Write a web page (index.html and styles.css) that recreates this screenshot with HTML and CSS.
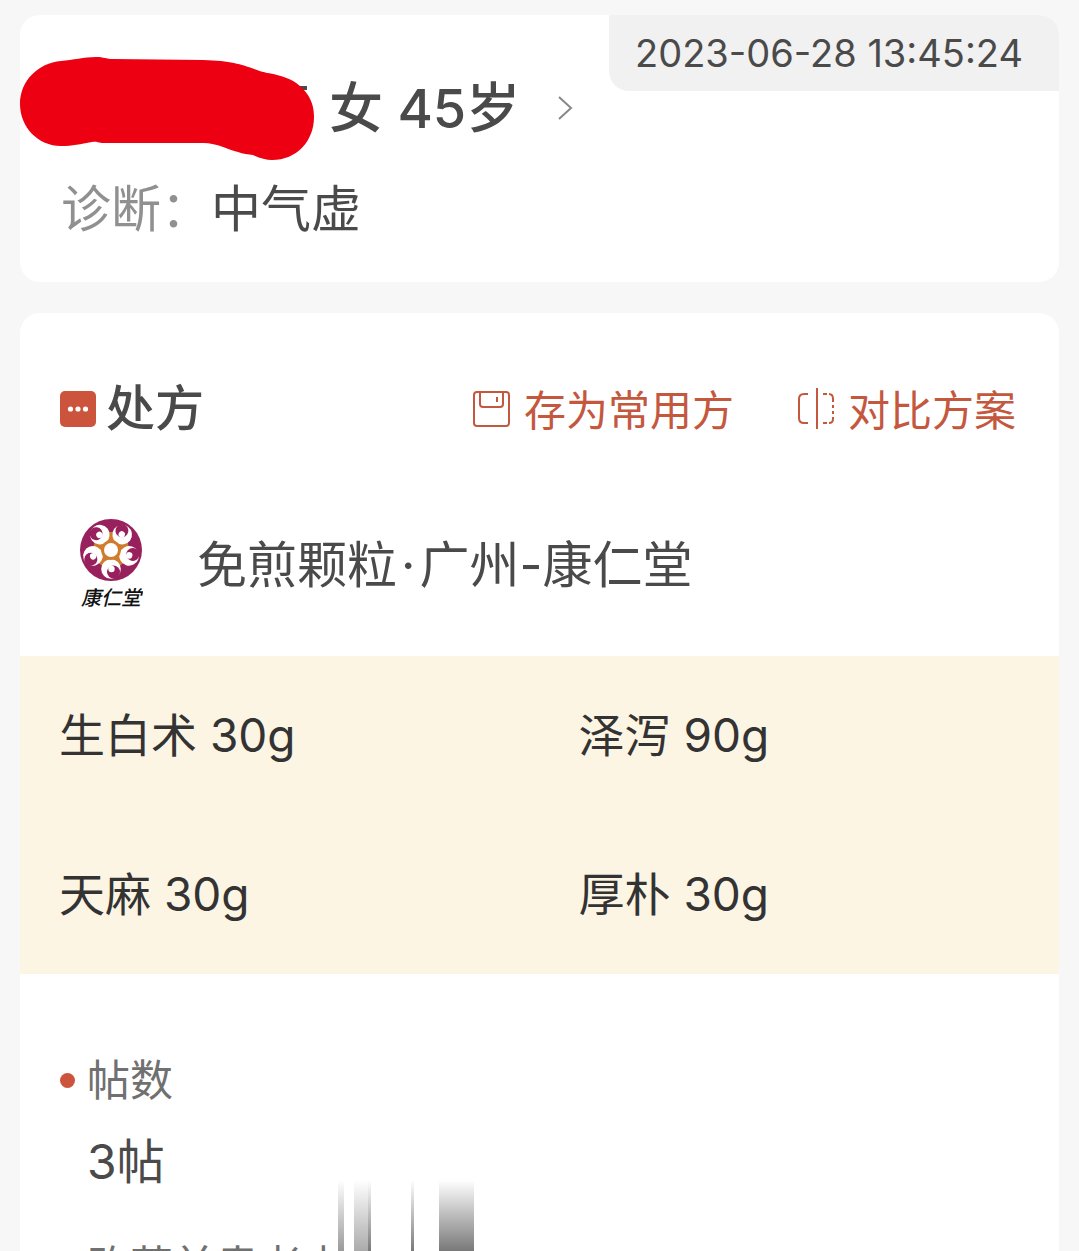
FILE: index.html
```
<!DOCTYPE html>
<html lang="zh-CN">

<head>
    <meta charset="UTF-8">
    <meta name="viewport" content="width=device-width, initial-scale=1.0">
    <title>处方详情</title>
    <link rel="stylesheet" href="styles.css">
</head>

<body>
    <main class="page">
        <section class="card patient">
            <time class="patient-time" datetime="2023-06-28T13:45:24">2023-06-28 13:45:24</time>
            <a class="patient-row" href="#patient">
                <svg class="name-mask" viewBox="0 1 294 104" aria-hidden="true">
                    <path d="M280 30h7v4h-7z" fill="#4a4a4a" />
                    <path d="M41 5C53 4 64 1 76 1C84 1 86 3 93 3L183 4C212 5 220 8 237 14C244 17 250 17 257 19C270 22 278 27 284 34C291 42 294 50 294 61C294 85 277 104 252 104C246 104 240 102 233 99C228 98 223 98 218 96C208 94 198 87 183 87L83 87C78 87 78 85 72 86C60 88 53 90 41 90C18 90 0 71 0 48C0 25 18 7 41 5Z" fill="#ec0012" />
                </svg>
                <span class="patient-info">女 45岁</span>
                <svg class="arrow" viewBox="0 0 16 26" aria-hidden="true">
                    <path d="M2 1L14 12L2 23" fill="none" stroke="#888" stroke-width="2" />
                </svg>
            </a>
            <p class="diagnosis"><span class="diagnosis-label">诊断：</span>中气虚</p>
        </section>

        <section class="card recipe">
            <header class="recipe-header">
                <h1 class="recipe-title">
                    <svg class="title-icon" viewBox="0 0 36 36" aria-hidden="true">
                        <rect width="36" height="36" rx="5" fill="#cc543c" />
                        <g fill="#fff">
                            <circle cx="10.5" cy="18" r="2.6" />
                            <circle cx="18" cy="18" r="2.6" />
                            <circle cx="25.5" cy="18" r="2.6" />
                        </g>
                    </svg>
                    处方
                </h1>
                <div class="actions">
                    <button type="button" class="action">
                        <svg class="action-icon" viewBox="0 0 40 42" aria-hidden="true">
                            <rect x="2" y="4" width="35" height="34" rx="3" />
                            <path d="M8 4V16Q8 19 11 19H28Q31 19 31 16V4M25 9V14" />
                        </svg>
                        <span>存为常用方</span>
                    </button>
                    <button type="button" class="action">
                        <svg class="action-icon" viewBox="0 0 40 42" aria-hidden="true">
                            <path d="M12 6H8Q3 6 3 11V30Q3 35 8 35H12M21 0V41" />
                            <path d="M27 6H31M33 6Q37 6 37 11V14M37 17V20M37 23V26M37 29V31Q37 35 33 35M31 35H27" />
                        </svg>
                        <span>对比方案</span>
                    </button>
                </div>
            </header>

            <div class="pharmacy">
                <svg class="logo" viewBox="0 0 64 92" role="img" aria-label="康仁堂">
                    <defs>
                        <g id="swirl">
                            <circle cx="32" cy="12" r="9.8" fill="#fff" />
                            <circle cx="29.5" cy="9" r="6.5" fill="#98205c" />
                            <circle cx="31.5" cy="12" r="3.2" fill="#fff" />
                        </g>
                    </defs>
                    <circle cx="32" cy="31" r="31" fill="#98205c" />
                    <circle cx="32" cy="31" r="18" fill="#d17b2d" />
                    <use href="#swirl" transform="rotate(36 32 31)" />
                    <use href="#swirl" transform="rotate(108 32 31)" />
                    <use href="#swirl" transform="rotate(180 32 31)" />
                    <use href="#swirl" transform="rotate(252 32 31)" />
                    <use href="#swirl" transform="rotate(324 32 31)" />
                    <circle cx="32" cy="31" r="10" fill="#d17b2d" />
                    <circle cx="32" cy="31" r="7" fill="#fff" />
                    <text class="logo-text" x="32" y="86" text-anchor="middle">康仁堂</text>
                </svg>
                <span>免煎颗粒<span class="dot">·</span>广州-康仁堂</span>
            </div>

            <ul class="herbs">
                <li>生白术 30g</li>
                <li>泽泻 90g</li>
                <li>天麻 30g</li>
                <li>厚朴 30g</li>
            </ul>

            <dl class="details">
                <dt class="marked">帖数</dt>
                <dd>3帖</dd>
                <dt class="smeared">购药前患者查</dt>
            </dl>
        </section>
    </main>
</body>

</html>
```

FILE: styles.css
```
* {
    box-sizing: border-box;
}

body {
    margin: 0;
    height: 100vh;
    overflow: hidden;
    background-color: #f7f7f7;
    color: #4a4a4a;
    font-family: Inter, "Noto Sans CJK SC", sans-serif;
    font-size: 50px;
    line-height: 72px;
}

.page {
    display: flex;
    flex-direction: column;
    gap: 31px;
    padding: 15px 20px;
}

.card {
    position: relative;
    background-color: #fff;
    border-radius: 20px;
    overflow: hidden;
}

/* patient card */
.patient {
    padding-bottom: 37px;
}

.patient-time {
    position: absolute;
    top: 0;
    right: 0;
    padding: 0 36px 0 26px;
    background-color: #f1f1f1;
    border-radius: 0 0 0 20px;
    font-size: 38px;
    line-height: 76px;
}

.patient-row {
    display: flex;
    align-items: center;
    padding-top: 42px;
    color: inherit;
    text-decoration: none;
}

.name-mask {
    width: 294px;
    height: 104px;
}

.patient-info {
    margin-left: 15px;
    font-size: 54px;
    font-weight: 500;
}

.arrow {
    width: 16px;
    height: 26px;
    margin-left: 37px;
}

.diagnosis {
    margin: 12px 0 0;
    padding-left: 41px;
}

.diagnosis-label {
    color: #909090;
}

/* prescription card */
.recipe-header {
    display: flex;
    justify-content: space-between;
    align-items: center;
    padding: 60px 43px 0 40px;
}

.recipe-title {
    display: flex;
    align-items: center;
    gap: 10px;
    margin: 0;
    font-size: 49px;
    font-weight: 500;
}

.title-icon {
    width: 36px;
    height: 36px;
}

.actions {
    display: flex;
    gap: 62px;
}

.action {
    display: flex;
    align-items: center;
    gap: 12px;
    padding: 0;
    border: none;
    background: none;
    color: #c4583f;
    font-family: inherit;
    font-size: 42px;
    line-height: 72px;
    cursor: pointer;
}

.action span {
    padding-top: 4px;
    line-height: 68px;
}

.action-icon {
    width: 40px;
    height: 42px;
    fill: none;
    stroke: currentColor;
    stroke-width: 2;
}

.pharmacy {
    display: flex;
    align-items: center;
    gap: 54px;
    padding: 74px 59px 45px;
}

.logo {
    width: 64px;
    height: 92px;
}

.logo-text {
    fill: #111;
    font-family: "Noto Sans CJK SC", sans-serif;
    font-size: 20px;
    font-style: italic;
    font-weight: 500;
}

.dot {
    margin: 0 4px;
}

.herbs {
    display: grid;
    grid-template-columns: 1fr 1fr;
    margin: 0;
    padding: 0;
    list-style: none;
    background-color: #fdf5e3;
    color: #333;
    font-size: 46px;
    line-height: 159px;
}

.herbs li {
    padding-left: 39px;
}

.details {
    margin: 0;
    padding: 70px 40px 40px 67px;
}

.details dt {
    color: #707070;
    font-size: 43px;
}

.details dd {
    margin: 10px 0 32px;
    font-size: 48px;
}

.marked {
    display: flex;
    align-items: center;
    gap: 12px;
    margin-left: -27px;
}

.marked::before {
    content: "";
    width: 15px;
    height: 15px;
    border-radius: 50%;
    background-color: #cc543c;
}

.smeared {
    position: relative;
}

/* grey streaks lying over the end of the line */
.smeared::after {
    content: "";
    position: absolute;
    top: -50px;
    left: 249px;
    width: 139px;
    height: 72px;
    background-image:
        linear-gradient(rgba(120, 120, 120, 0), #999),
        linear-gradient(rgba(120, 120, 120, 0), #aaa),
        linear-gradient(rgba(120, 120, 120, 0), #777),
        linear-gradient(rgba(120, 120, 120, 0), #777),
        linear-gradient(rgba(120, 120, 120, 0), #777);
    background-position: 2px 0, 18px 0, 32px 0, 75px 0, 103px 0;
    background-repeat: no-repeat;
    background-size: 6px 100%, 14px 100%, 3px 100%, 3px 100%, 35px 100%;
}
```
